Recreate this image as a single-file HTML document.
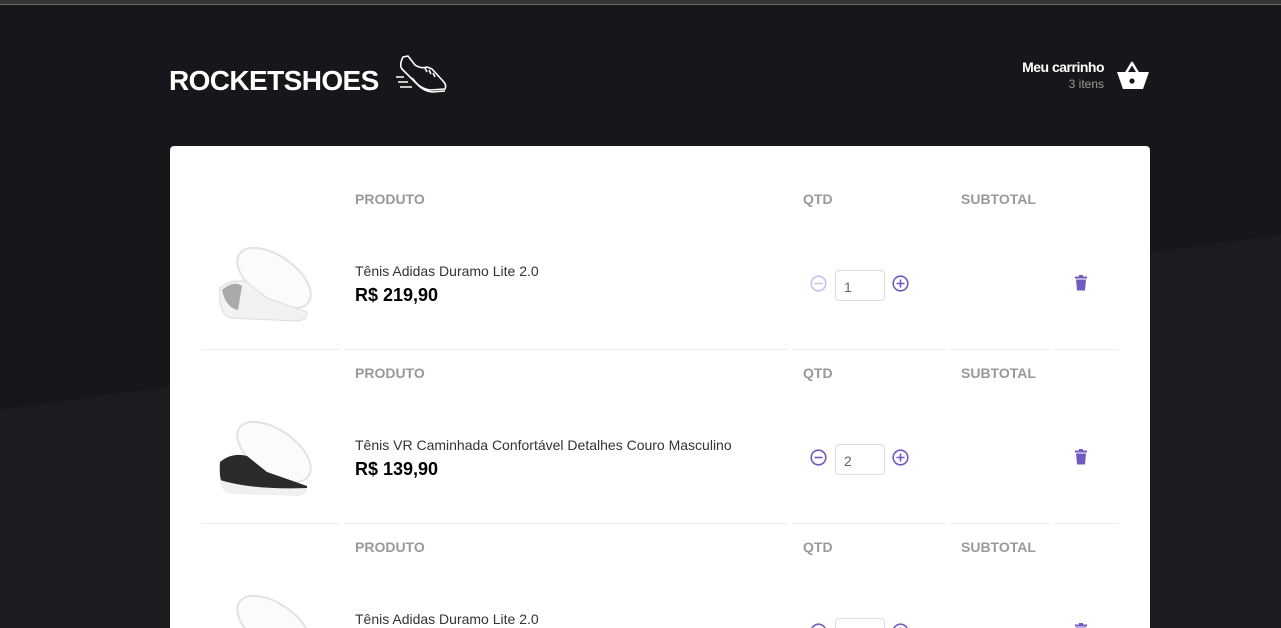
<!DOCTYPE html>
<html><head><meta charset="utf-8"><style>
*{margin:0;padding:0;box-sizing:border-box}
html,body{width:1281px;height:628px;overflow:hidden}
body{background:#1b1c20;font-family:"Liberation Sans",Arial,sans-serif;position:relative}
#wrap{position:absolute;left:0;top:0;width:1281px;height:628px;overflow:hidden}
.top{position:absolute;left:0;top:0;width:1281px;height:5px;background:#353535;border-bottom:1px solid #6a6a6a}
.bg{position:absolute;left:0;top:0;width:1281px;height:628px}
.a{position:absolute}
.logo{left:169px;top:65px;color:#fff;font-weight:bold;font-size:28px;letter-spacing:-0.6px}
.card{left:170px;top:146px;width:980px;height:500px;background:#fff;border-radius:4px}
.h{position:absolute;color:#999;font-weight:bold;font-size:14px}
.name{position:absolute;color:#333;font-size:14px}
.price{position:absolute;color:#000;font-weight:bold;font-size:18px}
.line{position:absolute;height:1px;background:#eee}
.inp{position:absolute;width:50px;height:31px;border:1px solid #ddd;border-radius:4px;font-size:14px;color:#666;padding:8px 0 0 8px}
</style></head><body><div id="wrap">
<svg class="bg" width="1281" height="628"><polygon points="0,0 1281,0 1281,235 0,410" fill="#17171b"/></svg>
<div class="top"></div>
<div class="a logo">ROCKETSHOES</div>
<svg class="a" style="left:394px;top:55px" width="54" height="40" viewBox="0 0 54 40" fill="none" stroke="#fff" stroke-width="1.6" stroke-linejoin="round">
<path d="M9 2 L14 1 L21 10 Q27 14 33 12 L38 14 L49 26 Q53 30 51 34 L36 35 Q28 34 22 28 L8 14 Q5 10 9 2 Z"/>
<path d="M18 23 L24 30 Q30 36 38 37 L51 36"/>
<path d="M31 13 L33 17 M35 15 L37 19 M39 18 L41 22"/>
<path d="M2 22 H10 M4 27 H14 M6 32 H18"/>
</svg>
<div class="a" style="right:177px;top:59px;color:#fff;font-weight:bold;font-size:14px;letter-spacing:-0.5px;text-align:right">Meu carrinho</div>
<div class="a" style="right:177px;top:77px;color:#999;font-size:12px;text-align:right">3 itens</div>
<svg class="a" style="left:1116px;top:60px" width="34" height="32" viewBox="0 0 34 32">
<path d="M10 13 L16 3 L22 13" fill="none" stroke="#fff" stroke-width="2.5" stroke-linejoin="round"/>
<path d="M1 12 H33 L27 29 H7 Z" fill="#fff"/>
<circle cx="16" cy="21" r="2.6" fill="#17171b"/>
</svg>
<div class="a card"></div>

<div class="h" style="left:355px;top:191px">PRODUTO</div>
<div class="h" style="left:803px;top:191px">QTD</div>
<div class="h" style="left:961px;top:191px">SUBTOTAL</div>
<svg class="a" style="left:212px;top:240px" width="100" height="85" viewBox="0 0 100 85">
<ellipse cx="62" cy="38" rx="42" ry="22" transform="rotate(35 62 38)" fill="#fbfbfb" stroke="#e2e2e2" stroke-width="2"/>
<path d="M8 48 Q20 38 35 42 L55 58 Q78 66 95 72 Q96 80 85 81 L18 78 Q6 74 8 48 Z" fill="#f2f2f2" stroke="#ddd"/>
<path d="M10 50 Q22 40 30 46 L26 70 Q14 68 10 50 Z" fill="#aaa"/>
</svg>
<div class="name" style="left:355px;top:263px">Tênis Adidas Duramo Lite 2.0</div>
<div class="price" style="left:355px;top:285px">R$ 219,90</div>
<svg class="a" style="left:810px;top:275px" width="17" height="17"><circle cx="8.5" cy="8.5" r="7.3" fill="none" stroke="#c9bfee" stroke-width="1.6"/><path d="M4.5 8.5h8" stroke="#c9bfee" stroke-width="1.6"/></svg>
<div class="inp" style="left:835px;top:270px">1</div>
<svg class="a" style="left:892px;top:275px" width="17" height="17"><circle cx="8.5" cy="8.5" r="7.3" fill="none" stroke="#7159c1" stroke-width="1.6"/><path d="M4.5 8.5h8M8.5 4.5v8" stroke="#7159c1" stroke-width="1.6"/></svg>
<svg class="a" style="left:1075px;top:275px" width="12" height="16"><rect x="0" y="1.5" width="12" height="2" fill="#7159c1"/><rect x="4" y="0" width="4" height="2" fill="#7159c1"/><path d="M1 4.5h10l-1 11H2z" fill="#7159c1"/></svg>
<div class="line" style="left:202px;top:349px;width:138px"></div><div class="line" style="left:344px;top:349px;width:444px"></div><div class="line" style="left:792px;top:349px;width:154px"></div><div class="line" style="left:950px;top:349px;width:100px"></div><div class="line" style="left:1054px;top:349px;width:64px"></div>

<div class="h" style="left:355px;top:365px">PRODUTO</div>
<div class="h" style="left:803px;top:365px">QTD</div>
<div class="h" style="left:961px;top:365px">SUBTOTAL</div>
<svg class="a" style="left:212px;top:414px" width="100" height="85" viewBox="0 0 100 85">
<ellipse cx="62" cy="38" rx="42" ry="22" transform="rotate(35 62 38)" fill="#fbfbfb" stroke="#e2e2e2" stroke-width="2"/>
<path d="M8 48 Q20 38 35 42 L55 58 Q78 66 95 72 Q96 80 85 81 L18 78 Q6 74 8 48 Z" fill="#2a2a2c"/>
<path d="M8 66 Q40 76 95 74 Q96 81 85 82 L18 80 Q8 76 8 66 Z" fill="#f0f0f0"/>
</svg>
<div class="name" style="left:355px;top:437px">Tênis VR Caminhada Confortável Detalhes Couro Masculino</div>
<div class="price" style="left:355px;top:459px">R$ 139,90</div>
<svg class="a" style="left:810px;top:449px" width="17" height="17"><circle cx="8.5" cy="8.5" r="7.3" fill="none" stroke="#7159c1" stroke-width="1.6"/><path d="M4.5 8.5h8" stroke="#7159c1" stroke-width="1.6"/></svg>
<div class="inp" style="left:835px;top:444px">2</div>
<svg class="a" style="left:892px;top:449px" width="17" height="17"><circle cx="8.5" cy="8.5" r="7.3" fill="none" stroke="#7159c1" stroke-width="1.6"/><path d="M4.5 8.5h8M8.5 4.5v8" stroke="#7159c1" stroke-width="1.6"/></svg>
<svg class="a" style="left:1075px;top:449px" width="12" height="16"><rect x="0" y="1.5" width="12" height="2" fill="#7159c1"/><rect x="4" y="0" width="4" height="2" fill="#7159c1"/><path d="M1 4.5h10l-1 11H2z" fill="#7159c1"/></svg>
<div class="line" style="left:202px;top:523px;width:138px"></div><div class="line" style="left:344px;top:523px;width:444px"></div><div class="line" style="left:792px;top:523px;width:154px"></div><div class="line" style="left:950px;top:523px;width:100px"></div><div class="line" style="left:1054px;top:523px;width:64px"></div>

<div class="h" style="left:355px;top:539px">PRODUTO</div>
<div class="h" style="left:803px;top:539px">QTD</div>
<div class="h" style="left:961px;top:539px">SUBTOTAL</div>
<svg class="a" style="left:212px;top:588px" width="100" height="85" viewBox="0 0 100 85">
<ellipse cx="62" cy="38" rx="42" ry="22" transform="rotate(35 62 38)" fill="#fbfbfb" stroke="#e2e2e2" stroke-width="2"/>
<path d="M8 48 Q20 38 35 42 L55 58 Q78 66 95 72 Q96 80 85 81 L18 78 Q6 74 8 48 Z" fill="#f2f2f2" stroke="#ddd"/>
<path d="M10 50 Q22 40 30 46 L26 70 Q14 68 10 50 Z" fill="#aaa"/>
</svg>
<div class="name" style="left:355px;top:611px">Tênis Adidas Duramo Lite 2.0</div>
<svg class="a" style="left:810px;top:623px" width="17" height="17"><circle cx="8.5" cy="8.5" r="7.3" fill="none" stroke="#7159c1" stroke-width="1.6"/><path d="M4.5 8.5h8" stroke="#7159c1" stroke-width="1.6"/></svg>
<div class="inp" style="left:835px;top:618px"></div>
<svg class="a" style="left:892px;top:623px" width="17" height="17"><circle cx="8.5" cy="8.5" r="7.3" fill="none" stroke="#7159c1" stroke-width="1.6"/><path d="M4.5 8.5h8M8.5 4.5v8" stroke="#7159c1" stroke-width="1.6"/></svg>
<svg class="a" style="left:1075px;top:623px" width="12" height="16"><rect x="0" y="1.5" width="12" height="2" fill="#7159c1"/><rect x="4" y="0" width="4" height="2" fill="#7159c1"/><path d="M1 4.5h10l-1 11H2z" fill="#7159c1"/></svg>
</div></body></html>
